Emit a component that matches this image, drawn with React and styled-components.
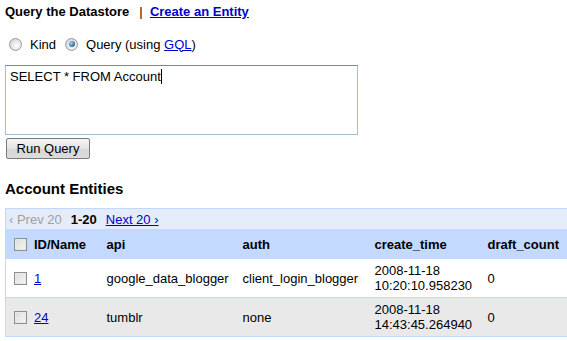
import styled, { createGlobalStyle } from "styled-components";

const GlobalStyle = createGlobalStyle`
  html, body {
    margin: 0;
    padding: 0;
    background: #fff;
    overflow: hidden;
  }
  body {
    font-family: "Liberation Sans", Arial, sans-serif;
    font-size: 13px;
    color: #000;
  }
`;

const Page = styled.div`
  padding: 4px 0 0 5px;
  width: 562px;
  height: 337px;
  overflow: hidden;
`;

const TopBar = styled.div`
  display: flex;
  align-items: baseline;
  gap: 10px;
  height: 16px;
  line-height: 16px;
`;

const Heading = styled.span`
  font-weight: bold;
  font-size: 13px;
`;

const Link = styled.a`
  color: #0000cc;
  text-decoration: underline;
  font-weight: ${({ bold }) => (bold ? "bold" : "normal")};
  cursor: pointer;
`;

const Options = styled.div`
  display: flex;
  align-items: center;
  margin-top: 17px;
  padding-left: 4px;
  height: 14px;
`;

const RadioLabel = styled.label`
  display: flex;
  align-items: center;
  gap: 8px;
  margin-right: 9px;
`;

const Radio = styled.span`
  width: 11px;
  height: 11px;
  border-radius: 50%;
  border: 1px solid #9a9a9a;
  background: radial-gradient(circle at 60% 60%, #ffffff 0%, #e2e2e2 55%, #c8c8c8 100%);
  position: relative;
  &::after {
    content: "";
    display: ${({ checked }) => (checked ? "block" : "none")};
    position: absolute;
    left: 2.5px;
    top: 2.5px;
    width: 6px;
    height: 6px;
    border-radius: 50%;
    background: radial-gradient(circle at 35% 35%, #a9d6f5 0%, #2d79ac 60%, #1b4f7a 100%);
  }
`;

const QueryBox = styled.div`
  margin-top: 14px;
  border: 1px solid #a5bfcf;
  border-top-color: #6f8ea3;
  padding: 3px 4px;
  box-sizing: border-box;
  width: 353px;
  height: 70px;
  font-size: 13px;
  line-height: 16px;
`;

const Caret = styled.span`
  display: inline-block;
  width: 1px;
  height: 15px;
  background: #000;
  vertical-align: -3px;
`;

const Button = styled.button`
  display: block;
  margin: 3px 0 0 1px;
  width: 84px;
  height: 21px;
  font-family: "Liberation Sans", Arial, sans-serif;
  font-size: 13px;
  color: #000;
  border: 1px solid #7a7a7a;
  border-radius: 2px;
  background: linear-gradient(#f4f4f4, #e4e4e4 50%, #d6d6d6 51%, #dcdcdc);
  padding: 0;
`;

const SectionTitle = styled.h2`
  margin: 21px 0 0;
  font-size: 15px;
  font-weight: bold;
  height: 18px;
  line-height: 18px;
`;

const Table = styled.table`
  margin-top: 10px;
  border-collapse: collapse;
  table-layout: fixed;
  width: 600px;
  border-left: 1px solid #c3d9ff;
`;

const PagerCell = styled.td`
  background: #e5ecf9;
  border-top: 1px solid #c3d9ff;
  height: 20px;
  padding: 0 0 0 3px;
  font-size: 13px;
`;

const Muted = styled.span`
  color: #a0a0a0;
  margin-right: 9px;
`;

const Current = styled.b`
  margin-right: 9px;
`;

const HeadCell = styled.th`
  background: #c3d9ff;
  text-align: left;
  font-weight: bold;
  height: 30px;
  padding: 0 0 0 ${({ pad }) => pad || 10}px;
  vertical-align: middle;
`;

const Row = styled.tr`
  background: ${({ shaded }) => (shaded ? "#e9e9e9" : "#fff")};
  border-bottom: 1px solid #c3d9ff;
`;

const Cell = styled.td`
  height: 38px;
  padding: 0 0 0 ${({ pad }) => pad || 10}px;
  vertical-align: middle;
  line-height: 15px;
`;

const IdWrap = styled.span`
  display: flex;
  align-items: center;
  gap: 7px;
`;

const Check = styled.span`
  display: inline-block;
  width: 11px;
  height: 11px;
  border: 1px solid #8f8f8f;
  background: linear-gradient(135deg, #dcdcdc, #f6f6f6);
  box-shadow: inset 0 0 0 1px #e8e8e8;
  flex: none;
`;

const rows = [
  { id: "1", api: "google_data_blogger", auth: "client_login_blogger", date: "2008-11-18", time: "10:20:10.958230", drafts: "0" },
  { id: "24", api: "tumblr", auth: "none", date: "2008-11-18", time: "14:43:45.264940", drafts: "0" },
];

export default function App() {
  return (
    <>
      <GlobalStyle />
      <Page>
        <TopBar>
          <Heading>Query the Datastore</Heading>
          <span>
            |&nbsp; <Link bold>Create an Entity</Link>
          </span>
        </TopBar>
        <Options>
          <RadioLabel>
            <Radio />
            Kind
          </RadioLabel>
          <RadioLabel>
            <Radio checked />
            <span>
              Query (using <Link>GQL</Link>)
            </span>
          </RadioLabel>
        </Options>
        <QueryBox>
          SELECT * FROM Account<Caret />
        </QueryBox>
        <Button>Run Query</Button>
        <SectionTitle>Account Entities</SectionTitle>
        <Table>
          <colgroup>
            <col style={{ width: 91 }} />
            <col style={{ width: 136 }} />
            <col style={{ width: 132 }} />
            <col style={{ width: 113 }} />
            <col style={{ width: 128 }} />
          </colgroup>
          <tbody>
            <tr>
              <PagerCell colSpan={5}>
                <Muted>‹ Prev 20</Muted>
                <Current>1-20</Current>
                <Link>Next 20 ›</Link>
              </PagerCell>
            </tr>
            <tr>
              <HeadCell pad={8}>
                <IdWrap>
                  <Check />
                  ID/Name
                </IdWrap>
              </HeadCell>
              <HeadCell>api</HeadCell>
              <HeadCell>auth</HeadCell>
              <HeadCell>create_time</HeadCell>
              <HeadCell>draft_count</HeadCell>
            </tr>
            {rows.map((r, i) => (
              <Row key={r.id} shaded={i % 2 === 1}>
                <Cell pad={8}>
                  <IdWrap>
                    <Check />
                    <Link>{r.id}</Link>
                  </IdWrap>
                </Cell>
                <Cell>{r.api}</Cell>
                <Cell>{r.auth}</Cell>
                <Cell>
                  {r.date}
                  <br />
                  {r.time}
                </Cell>
                <Cell>{r.drafts}</Cell>
              </Row>
            ))}
          </tbody>
        </Table>
      </Page>
    </>
  );
}
